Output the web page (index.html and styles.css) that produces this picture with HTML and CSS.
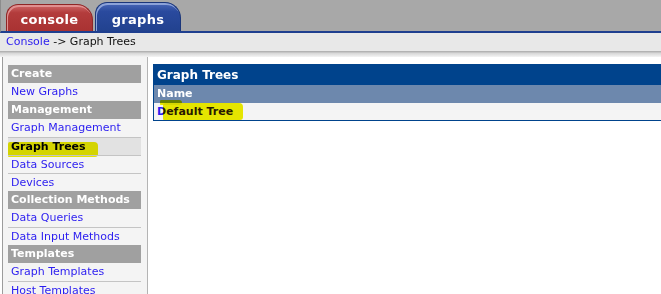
FILE: index.html
```html
<!DOCTYPE html>
<html lang="en">
<head>
    <meta charset="UTF-8">
    <title>Console - Graph Trees</title>
    <link rel="stylesheet" href="styles.css">
</head>
<body>

    <div class="topbar">
        <span class="tab tab-console">console</span>
        <span class="tab tab-graphs">graphs</span>
    </div>

    <div class="crumb">
        <a href="#">Console</a> -&gt; Graph Trees
    </div>
    <div class="shade"></div>

    <div class="main">
        <nav class="side">
            <div class="head">Create</div>
            <a class="item" href="#">New Graphs</a>
            <div class="head">Management</div>
            <a class="item" href="#">Graph Management</a>
            <a class="item selected" href="#">Graph Trees<span class="marker marker-side"></span></a>
            <a class="item" href="#">Data Sources</a>
            <a class="item" href="#">Devices</a>
            <div class="head">Collection Methods</div>
            <a class="item" href="#">Data Queries</a>
            <a class="item" href="#">Data Input Methods</a>
            <div class="head">Templates</div>
            <a class="item" href="#">Graph Templates</a>
            <a class="item" href="#">Host Templates</a>
        </nav>

        <section class="content">
            <div class="panel">
                <div class="panel-title">Graph Trees</div>
                <div class="panel-cols">Name</div>
                <div class="panel-row">
                    <a href="#">Default Tree</a>
                    <span class="marker marker-row"></span>
                    <span class="marker marker-tip"></span>
                </div>
            </div>
        </section>
    </div>

</body>
</html>
```

FILE: styles.css
```css
body {
    margin: 0;
    padding: 0;
    font-family: 'DejaVu Sans', Verdana, sans-serif;
    font-size: 11px;
    background: white;
    overflow: hidden;
}

a {
    color: #2a1cf0;
    text-decoration: none;
}

/* top tabs */
.topbar {
    height: 31px;
    background: #a8a8a8;
    border-bottom: 2px solid #1f3f8f;
    border-left: 1px solid #8c8c8c;
    display: flex;
    align-items: flex-end;
    padding-left: 5px;
    gap: 2px;
}

.tab {
    height: 27px;
    box-sizing: border-box;
    padding-top: 7px;
    text-align: center;
    color: white;
    font-weight: bold;
    font-size: 13px;
    letter-spacing: 0.3px;
    border-radius: 12px 16px 0 0;
}

.tab-console {
    width: 87px;
    background: linear-gradient(#d06868, #b33c3c 30%, #a93232);
    border: 1px solid #8e2626;
    border-bottom: none;
    box-shadow: inset 1px 2px 0 #e09090;
}

.tab-graphs {
    width: 86px;
    height: 29px;
    padding-top: 9px;
    background: linear-gradient(#4a68b8, #2a4a9e 30%, #22428f);
    border: 1px solid #1b367a;
    border-bottom: none;
    box-shadow: inset 1px 2px 0 #8ca2d8;
}

/* breadcrumb */
.crumb {
    height: 18px;
    line-height: 18px;
    background: #e8e8e8;
    padding-left: 6px;
    color: #111;
}

.shade {
    height: 6px;
    background: linear-gradient(#a8a8a8, #d8d8d8 40%, #f4f4f4);
}

.main {
    display: flex;
    align-items: flex-start;
}

/* left menu */
.side {
    width: 133px;
    min-height: 260px;
    margin-left: 2px;
    padding: 8px 6px 0 5px;
    background: #f4f4f4;
    border-left: 1px solid #9c9c9c;
    border-right: 1px solid #b4b4b4;
    display: flex;
    flex-direction: column;
}

.head {
    height: 18px;
    line-height: 18px;
    padding-left: 3px;
    background: #a0a0a0;
    color: white;
    font-weight: bold;
}

.item {
    position: relative;
    height: 18px;
    line-height: 18px;
    box-sizing: border-box;
    padding-left: 3px;
}

.item + .item {
    border-top: 1px solid #c4c4c4;
    line-height: 17px;
}

.item.selected {
    background: #e2e2e2;
    color: #000;
    font-weight: bold;
}

/* yellow highlighter strokes */
.marker {
    position: absolute;
    background: #f0f000;
    mix-blend-mode: multiply;
    border-radius: 2px 4px 3px 1px;
}

.marker-side {
    left: 0;
    top: 4px;
    width: 90px;
    height: 15px;
}

.marker-row {
    left: 9px;
    top: 0;
    width: 80px;
    height: 17px;
}

.marker-tip {
    left: 6px;
    top: -3px;
    width: 22px;
    height: 5px;
}

/* content panel */
.content {
    flex: 1;
    padding: 7px 0 0 5px;
}

.panel {
    margin-right: -10px;
    border: 1px solid #00438c;
}

.panel-title {
    height: 20px;
    line-height: 20px;
    background: #00438c;
    color: white;
    font-weight: bold;
    font-size: 12px;
    padding-left: 3px;
}

.panel-cols {
    height: 18px;
    line-height: 18px;
    background: #6d88ad;
    color: white;
    font-weight: bold;
    padding-left: 3px;
}

.panel-row {
    position: relative;
    height: 17px;
    line-height: 17px;
    background: #f4f4f4;
    padding-left: 3px;
    font-weight: bold;
}
```
